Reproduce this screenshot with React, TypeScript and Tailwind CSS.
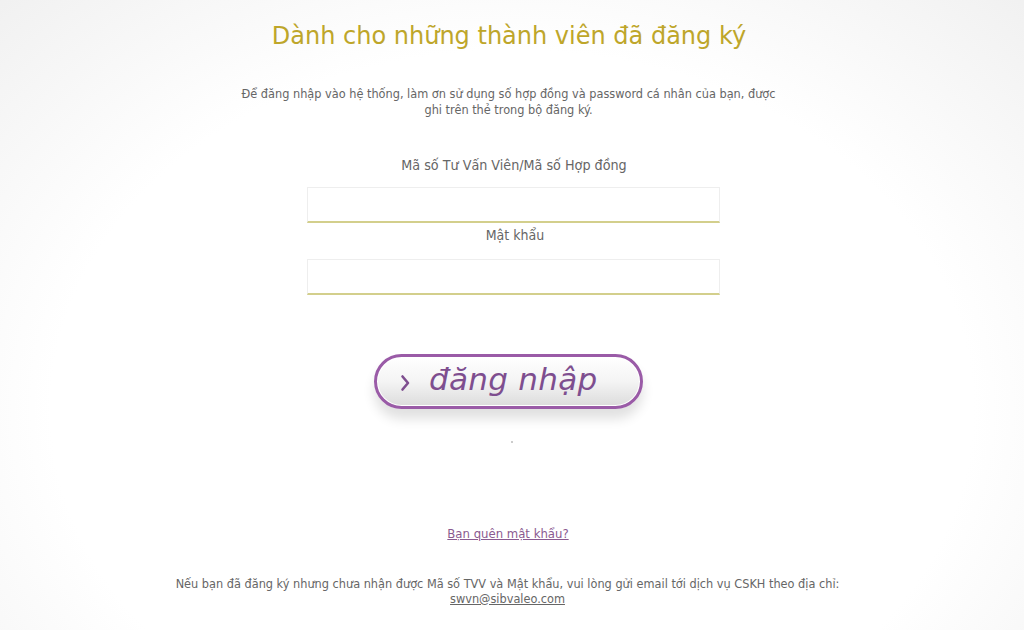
import React from "react";

const cond = { fontFamily: "'DejaVu Sans Condensed', 'DejaVu Sans', sans-serif" };

export default function App() {
  return (
    <div
      className="w-[1024px] h-[630px] overflow-hidden flex flex-col items-center text-[#666666] bg-[radial-gradient(ellipse_75%_95%_at_50%_65%,#ffffff_60%,#efefef_100%)]"
      style={{ fontFamily: "'DejaVu Sans', sans-serif" }}
    >
      <h1 className="mt-[18px] text-[24px] leading-[36px] text-[#bea62a] ml-[-6px] whitespace-nowrap">
        Dành cho những thành viên đã đăng ký
      </h1>
      <p className="mt-[32px] ml-[-7px] text-[12.6px] leading-[16px] text-center whitespace-nowrap" style={cond}>
        Để đăng nhập vào hệ thống, làm ơn sử dụng số hợp đồng và password cá nhân của bạn, được
        <br />
        ghi trên thẻ trong bộ đăng ký.
      </p>
      <label className="mt-[38px] text-[14.2px] leading-[18px] ml-[4px]" style={cond}>
        Mã số Tư Vấn Viên/Mã số Hợp đồng
      </label>
      <input
        type="text"
        className="mt-[13px] w-[413px] h-[36px] bg-white border border-[#eeeeee] border-b-2 border-b-[#d3cf8c] outline-none ml-[3px]"
      />
      <label className="mt-[3px] text-[14px] leading-[18px] ml-[6px]" style={cond}>
        Mật khẩu
      </label>
      <input
        type="password"
        className="mt-[15px] w-[413px] h-[36px] bg-white border border-[#eeeeee] border-b-2 border-b-[#d3cf8c] outline-none ml-[3px]"
      />
      <button
        type="button"
        className="mt-[59px] ml-[-7px] w-[269px] h-[55px] rounded-full border-[3px] border-[#9a5ba7] bg-[linear-gradient(to_bottom,#ffffff_0%,#f4f4f4_50%,#dcdcdc_100%)] shadow-[0_10px_12px_rgba(0,0,0,0.12),inset_0_0_0_1px_#ffffff] flex items-center pl-[22px] text-[#7e4e8f]"
      >
        <svg width="12" height="18" viewBox="0 0 12 18" className="mt-[2px]">
          <path d="M3.5 2.5 L9 9 L3.5 15.5" fill="none" stroke="#7e4e8f" strokeWidth="2.6" strokeLinecap="round" strokeLinejoin="round" />
        </svg>
        <span className="ml-[18px] mb-[6px] italic text-[31px] leading-[40px] tracking-[0.3px]">đăng nhập</span>
      </button>
      <div className="mt-[32px] w-[2px] h-[2px] rounded-full bg-[#bbbbbb]" />
      <a href="#" className="mt-[83px] text-[13px] leading-[16px] text-[#8a5a90] underline ml-[-8px]" style={cond}>
        Bạn quên mật khẩu?
      </a>
      <p className="mt-[34px] ml-[-9px] text-[12.6px] leading-[15px] text-center whitespace-nowrap" style={cond}>
        Nếu bạn đã đăng ký nhưng chưa nhận được Mã số TVV và Mật khẩu, vui lòng gửi email tới dịch vụ CSKH theo địa chỉ:
        <br />
        <a href="#" className="underline">swvn@sibvaleo.com</a>
      </p>
    </div>
  );
}
